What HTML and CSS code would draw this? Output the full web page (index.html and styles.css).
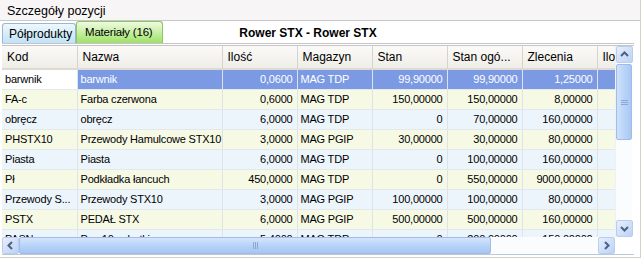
FILE: index.html
```html
<!DOCTYPE html>
<html>
<head>
  <meta charset="utf-8">
  <link rel="stylesheet" href="styles.css">
</head>
<body>
  <div class="panel">
    <div class="caption">Szczegóły pozycji</div>

    <div class="tabbar">
      <div class="tab tab-blue">Półprodukty</div>
      <div class="tab tab-green">Materiały (16)</div>
      <div class="doc-title">Rower STX - Rower STX</div>
    </div>

    <div class="grid">
      <div class="grid-view">
        <table class="rows">
          <colgroup>
            <col class="c-kod"><col class="c-nazwa"><col class="c-num"><col class="c-num">
            <col class="c-num"><col class="c-num"><col class="c-num"><col class="c-last">
          </colgroup>
          <thead>
            <tr>
              <th>Kod</th><th>Nazwa</th><th>Ilość</th><th>Magazyn</th>
              <th>Stan</th><th>Stan ogó...</th><th>Zlecenia</th><th>Ilość</th>
            </tr>
          </thead>
          <tbody>
            <tr class="selected">
              <td class="focus">barwnik</td><td>barwnik</td><td class="num">0,0600</td><td>MAG TDP</td>
              <td class="num">99,90000</td><td class="num">99,90000</td><td class="num">1,25000</td><td></td>
            </tr>
            <tr class="odd">
              <td>FA-c</td><td>Farba czerwona</td><td class="num">0,6000</td><td>MAG TDP</td>
              <td class="num">150,00000</td><td class="num">150,00000</td><td class="num">8,00000</td><td></td>
            </tr>
            <tr>
              <td>obręcz</td><td>obręcz</td><td class="num">6,0000</td><td>MAG TDP</td>
              <td class="num">0</td><td class="num">70,00000</td><td class="num">160,00000</td><td></td>
            </tr>
            <tr class="odd">
              <td>PHSTX10</td><td>Przewody Hamulcowe STX10</td><td class="num">3,0000</td><td>MAG PGIP</td>
              <td class="num">30,00000</td><td class="num">30,00000</td><td class="num">80,00000</td><td></td>
            </tr>
            <tr>
              <td>Piasta</td><td>Piasta</td><td class="num">6,0000</td><td>MAG TDP</td>
              <td class="num">0</td><td class="num">100,00000</td><td class="num">160,00000</td><td></td>
            </tr>
            <tr class="odd">
              <td>Pł</td><td>Podkładka łancuch</td><td class="num">450,0000</td><td>MAG TDP</td>
              <td class="num">0</td><td class="num">550,00000</td><td class="num">9000,00000</td><td></td>
            </tr>
            <tr>
              <td>Przewody S...</td><td>Przewody STX10</td><td class="num">3,0000</td><td>MAG PGIP</td>
              <td class="num">100,00000</td><td class="num">100,00000</td><td class="num">80,00000</td><td></td>
            </tr>
            <tr class="odd">
              <td>PSTX</td><td>PEDAŁ STX</td><td class="num">6,0000</td><td>MAG PGIP</td>
              <td class="num">500,00000</td><td class="num">500,00000</td><td class="num">160,00000</td><td></td>
            </tr>
            <tr>
              <td>PASN</td><td>Pas 10 zębatki</td><td class="num">5,4000</td><td>MAG TDP</td>
              <td class="num">0</td><td class="num">200,00000</td><td class="num">150,00000</td><td></td>
            </tr>
          </tbody>
        </table>
      </div>

      <div class="vscroll">
        <div class="sb-btn">
          <svg width="15" height="15" viewBox="0 0 15 15"><path d="M4 9 L7.5 5.5 L11 9" fill="none" stroke="#4d6185" stroke-width="2"/></svg>
        </div>
        <div class="v-track">
          <div class="v-thumb"><span class="grip-h"></span></div>
        </div>
        <div class="sb-btn">
          <svg width="15" height="15" viewBox="0 0 15 15"><path d="M4 6 L7.5 9.5 L11 6" fill="none" stroke="#4d6185" stroke-width="2"/></svg>
        </div>
      </div>

      <div class="hscroll">
        <div class="sb-btn">
          <svg width="15" height="15" viewBox="0 0 15 15"><path d="M9 4 L5.5 7.5 L9 11" fill="none" stroke="#4d6185" stroke-width="2"/></svg>
        </div>
        <div class="h-track">
          <div class="h-thumb"><span class="grip-v"></span></div>
        </div>
        <div class="sb-btn">
          <svg width="15" height="15" viewBox="0 0 15 15"><path d="M6 4 L9.5 7.5 L6 11" fill="none" stroke="#4d6185" stroke-width="2"/></svg>
        </div>
      </div>
      <div class="corner"></div>
    </div>
  </div>
</body>
</html>
```

FILE: styles.css
```css
/* details panel */
* {box-sizing: border-box}

body {
  margin: 0;
  background: #fff;
  font-family: "Liberation Sans", Arial, sans-serif;
  font-size: 12px;
  color: #000;
}

.panel {
  width: 641px;
  height: 258px;
  border-right: 1px solid #d4d0c8;
  border-bottom: 1px solid #d4d0c8;
}

.caption {
  height: 21px;
  padding: 4px 0 0 7px;
  font-size: 12.5px;
  background: #f7f5f5;
  border-bottom: 1px solid #c8c6c6;
}

/* tabs */
.tabbar {
  display: flex;
  align-items: flex-end;
  height: 22px;
  padding-left: 2px;
}

.tab {
  height: 20px;
  padding: 3px 6px 0 6px;
  white-space: nowrap;
  border: 1px solid #9ab7cf;
  border-bottom: none;
  border-radius: 3px 3px 0 0;
}

.tab-blue {
  width: 74px;
  background: linear-gradient(#eef7fd, #bfe3f8);
}

.tab-green {
  width: 87px;
  height: 22px;
  padding: 4px 0 0 8px;
  font-size: 11.5px;
  letter-spacing: -0.2px;
  border-color: #8cc56a;
  background: linear-gradient(#effbe0, #9ee266);
}

.doc-title {
  width: 290px;
  padding-bottom: 3px;
  text-align: center;
  font-weight: bold;
}

/* grid */
.grid {
  display: grid;
  grid-template-columns: 613px 17px;
  grid-template-rows: 191px 17px;
  margin-left: 2px;
  width: 632px;
  border-top: 3px double #c6c4c4;
  border-bottom: 1px solid #b9c9d9;
}

.grid-view {
  overflow: hidden;
  background: #fff;
}

.rows {
  border-collapse: collapse;
  table-layout: fixed;
  width: 615px;
}

.c-kod { width: 75px }
.c-nazwa { width: 145px }
.c-num { width: 75px }
.c-last { width: 20px }

.rows th {
  height: 23px;
  padding: 0 5px;
  font-weight: normal;
  text-align: left;
  white-space: nowrap;
  overflow: hidden;
  background: linear-gradient(#fbfaf8, #efede7);
  border-right: 1px solid #d6d3cb;
  border-bottom: 2px solid #dcdad3;
}

.rows td {
  height: 20px;
  padding: 0 4px 0 3px;
  font-size: 11px;
  letter-spacing: -0.2px;
  white-space: nowrap;
  overflow: hidden;
  background: #edf5fc;
  border-right: 1px solid #dde3e9;
  border-bottom: 1px solid #e2e8ec;
}

.rows tr.odd td {
  background: #f6f9e4;
}

.rows tr.selected td {
  background: #7b9ae3;
  color: #fff;
}

.rows tr.selected td.focus {
  background: #fff;
  color: #000;
}

.rows td.num {
  text-align: right;
}

/* scrollbars */
.vscroll, .hscroll {
  display: flex;
  background: #fbfcfe;
}

.vscroll {
  flex-direction: column;
  border-left: 1px solid #eef2f7;
}

.sb-btn {
  width: 17px;
  height: 17px;
  display: flex;
  align-items: center;
  justify-content: center;
  border: 1px solid #b8cdef;
  border-radius: 2px;
  background: linear-gradient(135deg, #e6effd, #bcd2f5);
}

.v-track, .h-track {
  flex: 1;
  display: flex;
}

.v-track {
  flex-direction: column;
  padding-top: 1px;
}

.v-thumb {
  height: 76px;
  display: flex;
  align-items: center;
  justify-content: center;
  border: 1px solid #9fbde8;
  border-radius: 2px;
  background: linear-gradient(90deg, #cfe2fb, #b6d2f7 60%, #a9c8f2);
}

.h-thumb {
  width: 472px;
  display: flex;
  align-items: center;
  justify-content: center;
  border: 1px solid #9fbde8;
  border-radius: 2px;
  background: linear-gradient(#d4e5fb, #b3d0f7 60%, #a7c6f2);
}

.grip-h {
  width: 7px;
  height: 5px;
  border-top: 1px solid #8aa8d6;
  border-bottom: 1px solid #8aa8d6;
  background: linear-gradient(transparent 1px, #8aa8d6 1px, #8aa8d6 2px, transparent 2px);
}

.grip-v {
  width: 5px;
  height: 7px;
  border-left: 1px solid #8aa8d6;
  border-right: 1px solid #8aa8d6;
  background: linear-gradient(90deg, transparent 1px, #8aa8d6 1px, #8aa8d6 2px, transparent 2px);
}

.corner {
  background: #fff;
}
```
